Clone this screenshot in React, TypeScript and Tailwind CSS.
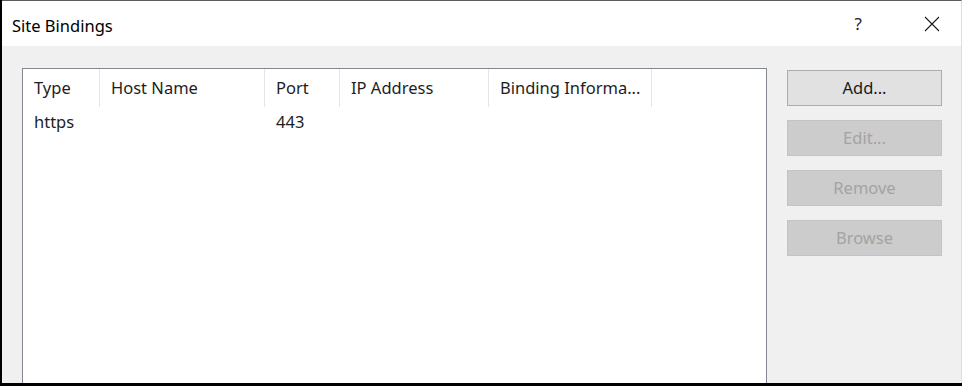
import React from 'react';

const columns = [
  { label: 'Type', width: 'w-[77px]' },
  { label: 'Host Name', width: 'w-[165px]' },
  { label: 'Port', width: 'w-[75px]' },
  { label: 'IP Address', width: 'w-[149px]' },
  { label: 'Binding Informa...', width: 'w-[163px]' },
];

const rows = [{ type: 'https', host: '', port: '443', ip: '', info: '' }];

const buttons = [
  { label: 'Add...', enabled: true },
  { label: 'Edit...', enabled: false },
  { label: 'Remove', enabled: false },
  { label: 'Browse', enabled: false },
];

const App = () => {
  return (
    <div className="w-[962px] h-[386px] bg-black pl-[2px] pb-[3px] overflow-hidden font-['Noto_Sans',sans-serif]">
      <div className="h-full flex flex-col border-t border-[#5c5c5c] border-r border-r-[#dedede] bg-[#f0f0f0]">
        {/* Title bar */}
        <div className="h-[45px] shrink-0 bg-white flex items-center pl-[10px] pr-[14px]">
          <span className="text-[16.5px] text-black mt-[6px]">Site Bindings</span>
          <span className="ml-auto text-[17px] text-[#222] mr-[62px]">?</span>
          <svg width="16" height="16" viewBox="0 0 16 16" className="mr-[7px]">
            <path d="M1 1 L15 15 M15 1 L1 15" stroke="#1a1a1a" strokeWidth="1.1" fill="none" />
          </svg>
        </div>

        {/* Body */}
        <div className="flex-1 flex pl-[20px] pt-[22px] min-h-0">
          {/* List */}
          <div className="w-[745px] bg-white border border-[#828790] border-b-0 self-stretch">
            <div className="flex h-[38px]">
              {columns.map((c) => (
                <div
                  key={c.label}
                  className={`${c.width} shrink-0 border-r border-[#e5e5e5] pl-[11px] flex items-center text-[16.5px] text-[#1e1e1e] whitespace-nowrap`}
                >
                  {c.label}
                </div>
              ))}
            </div>
            {rows.map((r) => (
              <div key={r.type} className="flex h-[30px] items-center text-[16.5px] text-[#1e1e1e]">
                <div className="w-[77px] pl-[11px]">{r.type}</div>
                <div className="w-[165px] pl-[11px]">{r.host}</div>
                <div className="w-[75px] pl-[11px]">{r.port}</div>
                <div className="w-[149px] pl-[11px]">{r.ip}</div>
                <div className="w-[163px] pl-[11px]">{r.info}</div>
              </div>
            ))}
          </div>

          {/* Buttons */}
          <div className="ml-[20px] pt-[2px] flex flex-col gap-[14px] w-[155px]">
            {buttons.map((b) => (
              <button
                key={b.label}
                className={
                  b.enabled
                    ? 'h-[36px] w-full bg-[#e1e1e1] border border-[#adadad] text-[16.5px] text-[#1a1a1a]'
                    : 'h-[36px] w-full bg-[#cccccc] border border-[#c4c4c4] text-[16.5px] text-[#a3a3a3]'
                }
              >
                {b.label}
              </button>
            ))}
          </div>
        </div>
      </div>
    </div>
  );
};

export default App;
